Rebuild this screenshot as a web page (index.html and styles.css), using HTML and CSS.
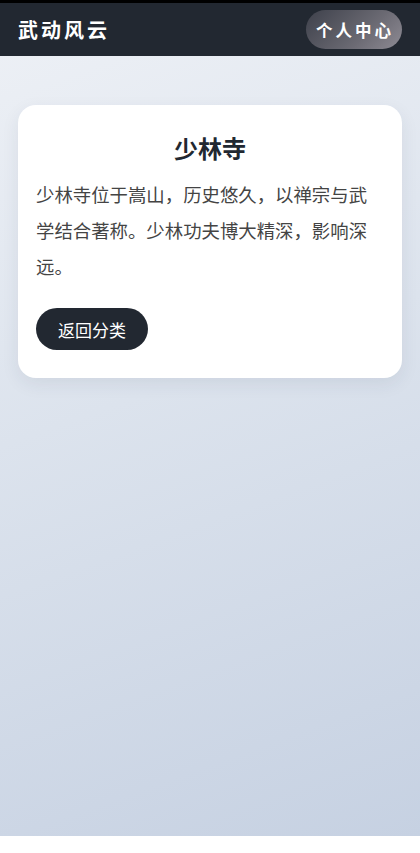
FILE: index.html
```html
<!DOCTYPE html>
<html lang="zh">
<head>
    <meta charset="UTF-8">
    <title>武动风云</title>
    <link rel="stylesheet" href="styles.css">
</head>
<body>
    <div class="page">
        <header class="topbar">
            <div class="brand">武动风云</div>
            <button class="profile-btn">个人中心</button>
        </header>
        <main class="content">
            <div class="card">
                <h2 class="card-title">少林寺</h2>
                <p class="card-text">少林寺位于嵩山，历史悠久，以禅宗与武学结合著称。少林功夫博大精深，影响深远。</p>
                <button class="back-btn">返回分类</button>
            </div>
        </main>
    </div>
</body>
</html>
```

FILE: styles.css
```css
* {
    box-sizing: border-box;
}

body {
    margin: 0;
    background-color: #fff;
    font-family: "Noto Sans CJK SC", "Noto Sans", sans-serif;
}

.page {
    height: 836px;
    background: linear-gradient(160deg, #eef1f6 0%, #dce3ed 45%, #c6d1e2 100%);
    border-top: 3px solid #000;
}

.topbar {
    height: 53px;
    background-color: #222831;
    display: flex;
    align-items: center;
    justify-content: space-between;
    padding: 0 18px;
}

.brand {
    color: #fff;
    font-size: 20px;
    font-weight: 700;
    letter-spacing: 3px;
}

.profile-btn {
    height: 39px;
    padding: 0 8px 0 10px;
    border: none;
    border-radius: 20px;
    background: linear-gradient(135deg, #3e414b 0%, #6a6972 60%, #8e8b94 100%);
    color: #fff;
    font-family: inherit;
    font-size: 16.5px;
    font-weight: 700;
    letter-spacing: 3px;
}

.content {
    padding: 49px 18px 0;
}

.card {
    background-color: #fff;
    border-radius: 18px;
    padding: 28px 18px;
    box-shadow: 0 6px 18px rgba(40, 55, 80, 0.08);
}

.card-title {
    margin: 0 0 14px;
    text-align: center;
    font-size: 24px;
    line-height: 29px;
    font-weight: 700;
    color: #222831;
}

.card-text {
    margin: 0 0 24px;
    font-size: 18.4px;
    line-height: 36px;
    color: #444;
}

.back-btn {
    height: 42px;
    padding: 0 22px;
    border: none;
    border-radius: 21px;
    background-color: #222831;
    color: #fff;
    font-family: inherit;
    font-size: 17px;
}
```
